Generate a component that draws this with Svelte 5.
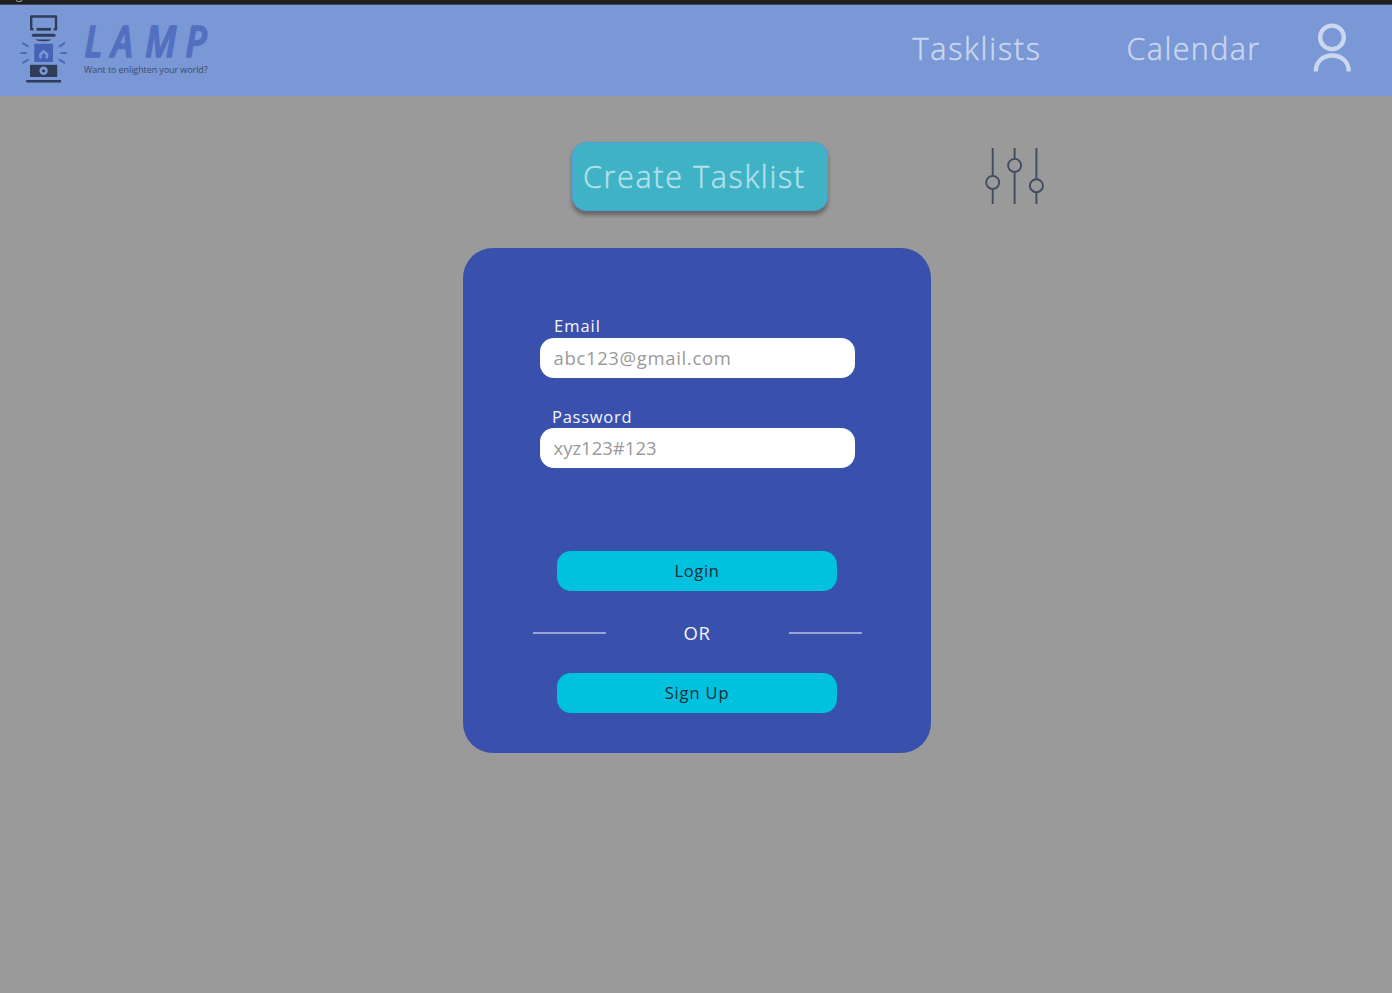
<script>
  const links = [
    { label: 'Tasklists', cls: 'tasklists' },
    { label: 'Calendar', cls: 'calendar' }
  ];
</script>

<div class="page">
  <div class="strip"><span>g</span></div>
  <header>
    <div class="brand">
      <svg class="lamp" width="54" height="76" viewBox="16 11 54 76">
        <g fill="none" stroke="#303d58">
          <path d="M33.5 29.2H31.2V16.5H56V29.2H53.7" stroke-width="2.4" stroke-linejoin="round" />
          <path d="M36.5 29.3H51" stroke-width="2.8" />
          <path d="M33.3 35.3H54" stroke-width="3" stroke-linecap="round" />
          <path d="M26.2 81.3H61" stroke-width="2.6" />
        </g>
        <path d="M35 39.4H52Q49 41.3 43.5 41.3T35 39.4Z" fill="#303d58" />
        <path d="M34.3 43.8H53V62H34.3Z" fill="#4564b6" />
        <path d="M41.2 58.3C38.6 54.6 41.4 53.6 43.6 51.4C46 53.6 48.8 54.6 46.1 58.3" fill="none" stroke="#7998d5" stroke-width="2.7" />
        <path d="M30 64.8H57.2V77H30Z" fill="#303d58" />
        <circle cx="43.6" cy="70.8" r="2.9" fill="#303d58" stroke="#7998d5" stroke-width="2.6" />
        <g stroke="#4564b6" stroke-width="1.8" stroke-linecap="round">
          <path d="M23 43.3L28 46.4M21.2 53.2H26M23 62.8L28 59.7M64.4 43.3L59.5 46.4M66 53.2H61.2M64.4 62.8L59.5 59.7" />
        </g>
      </svg>
      <div class="wordmark">
        <svg width="130" height="42" viewBox="82 20 130 42">
          <text class="name" transform="translate(0 57.2) scale(.86 1)" x="98 129.5 168.5 215.5">LAMP</text>
        </svg>
        <div class="tagline">Want to enlighten your world?</div>
      </div>
    </div>
    <nav>
      {#each links as link}
        <span class={link.cls}>{link.label}</span>
      {/each}
      <svg width="40" height="50" viewBox="1312 23 40 50" fill="none" stroke="#cbd6ef" stroke-width="4.4">
        <circle cx="1332" cy="37.4" r="11.8" />
        <path d="M1315.8 71.5C1315.8 61.5 1323 55.5 1332.2 55.5S1348.7 61.5 1348.7 71.5" />
      </svg>
    </nav>
  </header>

  <div class="toolbar">
    <button class="create">Create Tasklist</button>
    <svg width="60" height="58" viewBox="985 147 60 58" fill="none" stroke="#414b61" stroke-width="1.9">
      <path d="M992.7 148V175.7M992.7 189V204M1014.6 148V158.7M1014.6 172V204M1036.4 148V179M1036.4 192.4V204" />
      <circle cx="992.7" cy="182.4" r="6.5" />
      <circle cx="1014.6" cy="165.4" r="6.5" />
      <circle cx="1036.4" cy="185.7" r="6.5" />
    </svg>
  </div>

  <main>
    <label class="email" for="email">Email</label>
    <input id="email" class="mail" placeholder="abc123@gmail.com" />
    <label class="password" for="password">Password</label>
    <input id="password" placeholder="xyz123#123" />
    <button class="action login">Login</button>
    <div class="or"><i></i><span>OR</span><i></i></div>
    <button class="action signup">Sign Up</button>
  </main>
</div>

<style>
  :global(body) { margin: 0; }
  .page {
    height: 993px;
    overflow: hidden;
    background: #9a9a9a;
    font-family: "Open Sans", sans-serif;
    display: flex;
    flex-direction: column;
  }
  .strip {
    height: 4px;
    background: #1e1e1e;
    border-bottom: 1px solid #3b4863;
    overflow: hidden;
    flex: none;
    color: #aaa;
    font-size: 12px;
    line-height: 16px;
  }
  .strip span { display: block; margin: -13px 0 0 16px; }
  header {
    height: 90.5px;
    flex: none;
    background: #7998d5;
    display: flex;
    justify-content: space-between;
  }
  .brand { display: flex; padding: 6px 0 0 16px; }
  .wordmark { margin-left: 12px; padding-top: 9px; }
  .wordmark svg { display: block; overflow: visible; }
  .name {
    font: italic 600 42.5px "Open Sans", sans-serif;
    fill: #526fc0;
    stroke: #526fc0;
    stroke-width: 1.5;
    stroke-linejoin: round;
  }
  .tagline {
    margin: 1px 0 0 2px;
    font-size: 9px;
    letter-spacing: -.09px;
    line-height: 14px;
    color: #3b4b6c;
    white-space: nowrap;
  }
  nav {
    display: flex;
    align-items: flex-start;
    padding: 18px 40px 0 0;
    color: #cbd6ef;
    font-size: 30.5px;
    font-weight: 300;
    line-height: 51px;
    white-space: nowrap;
    -webkit-text-stroke: .5px currentColor;
  }
  .tasklists { width: 214px; letter-spacing: 1.75px; }
  .calendar { width: 185.5px; letter-spacing: 1.4px; }
  button { font-family: inherit; border: 0; margin: 0; padding: 0; }
  .toolbar {
    display: flex;
    padding: 46px 0 0 572px;
    height: 106px;
    flex: none;
  }
  .toolbar svg { margin: 5.5px 0 0 157px; }
  .create {
    box-sizing: border-box;
    width: 256px;
    height: 69.5px;
    border: 1.5px solid #4c9fe0;
    border-radius: 14px;
    background: #3fb2c6;
    box-shadow: 0 4px 4px rgba(0, 0, 0, .35);
    color: #b2e0e8;
    font-size: 30.5px;
    font-weight: 300;
    letter-spacing: 1.65px;
    line-height: 66px;
    text-align: left;
    padding-left: 10px;
    white-space: nowrap;
    -webkit-text-stroke: .5px currentColor;
  }
  main {
    box-sizing: border-box;
    width: 468px;
    height: 505px;
    margin-left: 463px;
    border-radius: 30px;
    background: #3951ac;
    display: flex;
    flex-direction: column;
    align-items: center;
    padding-top: 66px;
  }
  label {
    width: 286px;
    height: 24.5px;
    flex: none;
    color: #f4f6fc;
    font-size: 16.5px;
    line-height: 24px;
    letter-spacing: 1px;
  }
  .password { width: 290px; margin-top: 26px; line-height: 26px; letter-spacing: .75px; }
  input {
    box-sizing: border-box;
    width: 315px;
    height: 39.5px;
    flex: none;
    border: 0;
    border-radius: 14px;
    padding: 0 14px;
    background: #fff;
    font: 18.5px "Open Sans", sans-serif;
  }
  .mail { letter-spacing: .65px; }
  input::placeholder { color: #9a9a9a; opacity: 1; }
  .action {
    width: 280px;
    height: 39.5px;
    flex: none;
    border-radius: 14px;
    background: #00c2df;
    color: #1e2c38;
    font-size: 16.5px;
    line-height: 38px;
    letter-spacing: .6px;
  }
  .login { margin-top: 83.5px; }
  .signup { letter-spacing: .85px; }
  .or {
    width: 329px;
    height: 82.5px;
    display: flex;
    align-items: center;
    justify-content: space-between;
    color: #f4f6fc;
    font-size: 18.5px;
    letter-spacing: .5px;
  }
  .or i { width: 73px; height: 2px; margin-top: 2px; background: #97a4d3; }
  .or span { padding-top: 1px; }
</style>
